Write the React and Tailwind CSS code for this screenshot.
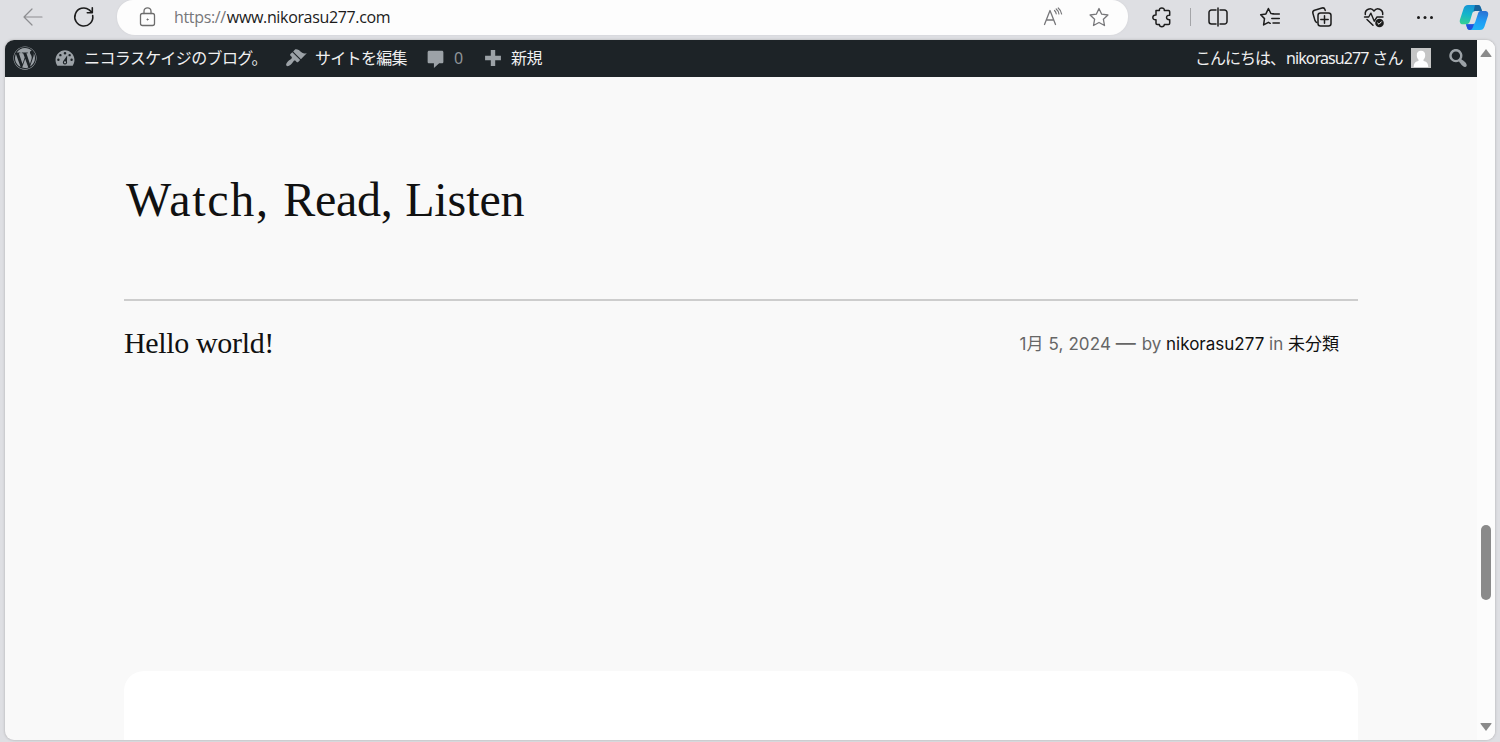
import { FaWordpress } from 'react-icons/fa'

function LineIcon({ children, className = 'text-[#1c1c1c]' }) {
  return (
    <svg
      className={`h-6 w-6 shrink-0 ${className}`}
      viewBox="0 0 24 24"
      fill="none"
      stroke="currentColor"
      strokeWidth="1.5"
      strokeLinecap="round"
      strokeLinejoin="round"
    >
      {children}
    </svg>
  )
}

function AdminIcon({ children, className = 'h-[22px] w-[22px]' }) {
  return (
    <svg className={`shrink-0 ${className}`} viewBox="0 0 20 20" fill="#9ca2a7">
      {children}
    </svg>
  )
}

function CopilotLogo() {
  return (
    <svg className="h-[27px] w-[30px] shrink-0" viewBox="0 0 30 27">
      <defs>
        <linearGradient id="left" x1="0.5" y1="0" x2="0.3" y2="1">
          <stop offset="0" stopColor="#1793d6" />
          <stop offset="0.5" stopColor="#13b5cb" />
          <stop offset="1" stopColor="#35cf94" />
        </linearGradient>
        <linearGradient id="right" x1="0.6" y1="0" x2="0.4" y2="1">
          <stop offset="0" stopColor="#2a74d4" />
          <stop offset="0.5" stopColor="#1f9cf4" />
          <stop offset="1" stopColor="#1fb4f6" />
        </linearGradient>
      </defs>
      <path d="M9 1h10c2 0 2.500 1.500 3 3l1 3h-7c-1.400 0-2.300 1-2.800 2.600L11 17c-.7 2.200-2 3.300-4 3.300H4C1 20.300.3 18 1 15.500L4.600 4.500C5.300 2.200 6.600 1 9 1z" fill="url(#left)" />
      <path d="M16 1h3c2 0 2.500 1.500 3 3l1 3h-7l-1.500.5z" fill="#17639c" />
      <path d="M21 26H11c-2 0-2.700-1.300-3.200-3L7 20.300h6.500c1.400 0 2.300-1 2.800-2.600L19 9.500C19.600 7.600 20.600 7 22 7h4c3 0 3.700 2.200 3 4.700L25.500 22.500C24.700 24.900 23.400 26 21 26z" fill="url(#right)" />
      <path d="M7 20.300h6.500l1.500-.5-1 3.200c-.7 2-1.700 3-3 3-2 0-2.700-1.300-3.200-3z" fill="#2450dc" />
    </svg>
  )
}

function Toolbar() {
  return (
    <header className="flex h-[39px] shrink-0 items-start">
      <div className="flex h-[34px] w-[117px] items-center gap-[27px] pl-[21px]">
        <LineIcon className="text-[#8d8e91]">
          <path d="M21 12H3M11 4 3 12l8 8" strokeWidth="1.2" />
        </LineIcon>
        <LineIcon>
          <path d="M20.700 10.600A9 9 0 1 1 17.200 4.800L20 7.500M20.300 2.800v5h-5" strokeWidth="1.600" />
        </LineIcon>
      </div>

      <div className="flex h-[35px] w-[1011px] items-center rounded-b-[18px] rounded-t-[16px] bg-[#fdfdfd] pb-px pl-[18px] pr-[17px] shadow-[0_0_2px_#cfcfd3]">
        <LineIcon className="text-[#6d6d6d]">
          <rect x="5.500" y="8.500" width="14" height="12" rx="2" strokeWidth="1.300" />
          <path d="M9 8.500V6.300a3.500 3.500 0 0 1 7 0v2.200" strokeWidth="1.300" />
          <circle cx="12.500" cy="14.500" r="0.700" fill="currentColor" strokeWidth="0.600" />
        </LineIcon>
        <p className="ml-[15px] whitespace-nowrap font-['Open_Sans',sans-serif] text-[16px] tracking-[-0.340px] text-[#1b1b1b]">
          <span className="text-[#77777a]">https://</span>
          <span className="pl-px">www.nikorasu277.com</span>
        </p>
        <div className="ml-auto flex items-center gap-[22px]">
          <LineIcon className="text-[#77777a]">
            <path d="M3.500 19.500 9 5.500l5.500 14M5.400 15h7.200" strokeWidth="1.300" />
            <path d="M13.500 5.500c1 1 1.600 2 1.700 3.300M15.200 4c1.600 1.300 2.500 3 2.700 5M17.200 3c2 1.600 3.100 3.500 3.400 6" strokeWidth="1.200" />
          </LineIcon>
          <LineIcon className="text-[#77777a]">
            <path d="m12 3.500 2.700 5.700 6.200.8-4.500 4.300 1.100 6.200-5.500-3-5.500 3 1.100-6.200L3.100 10l6.200-.8z" strokeWidth="1.300" />
          </LineIcon>
        </div>
      </div>

      <div className="flex h-[34px] items-center pl-[22px]">
        <LineIcon>
          <path d="M6 5.500h3.400C8.800 2 14.800 2 14.300 5.500H18.500c.8 0 1.200.5 1.200 1.200v3.500c-4.200-.6-4.200 5 0 4.500v3.500c0 .8-.5 1.200-1.200 1.200h-4.200c.5 3-5.500 3-4.900 0H7.200c-.8 0-1.200-.5-1.200-1.200v-3.400c-4.200.6-4.200-5.400 0-4.800z" />
        </LineIcon>
        <div className="ml-4 h-[18px] w-px bg-[#a4a5a8]" />
        <LineIcon className="ml-[15px] text-[#1c1c1c]">
          <path d="M10 5H5.500A2.500 2.500 0 0 0 3 7.500v9A2.500 2.500 0 0 0 5.500 19H10M14 5h4.500A2.500 2.500 0 0 1 21 7.500v9a2.500 2.500 0 0 1-2.500 2.500H14M12 3v18" />
        </LineIcon>
        <div className="ml-7 flex items-center gap-7">
          <LineIcon>
            <path d="M15.600 8.800 12.900 8.500 10.400 3.500 7.900 8.900l-5.200.9 3.800 3.800-.9 6.300 4.800-2.600 1.800 1M14.500 9h6.800M13.800 13.500h7.500M15 18h6.300" />
          </LineIcon>
          <LineIcon>
            <rect x="8" y="8" width="13" height="13" rx="2.500" />
            <path d="M14.500 10.800v7.400M10.800 14.500h7.400M6.800 17.500c-1-.3-1.500-1-1.800-1.900L2.900 8.200C2.500 6.700 3.300 5.600 4.600 5.200L12 3c1.500-.4 2.600.3 3 1.600l.2.800" />
          </LineIcon>
          <LineIcon>
            <path d="M3.300 9.500c-.7-5 5.700-7.800 8.700-3.500 3-4.300 9.300-1.500 8.700 3.500M5 14.500l6 5.800" />
            <path d="M2.500 12h4.200l2.200-3.800 3.400 8 2.700-4.200h6" strokeWidth="1.400" />
            <circle cx="17.500" cy="18" r="4.300" fill="currentColor" stroke="none" />
            <path d="m15.700 18.100 1.300 1.200 2.400-2.500" stroke="white" strokeWidth="1" />
          </LineIcon>
          <LineIcon className="-ml-px text-[#1c1c1c]">
            <g fill="currentColor" stroke="none">
              <circle cx="5.500" cy="12.500" r="1.500" />
              <circle cx="12" cy="12.500" r="1.500" />
              <circle cx="18.500" cy="12.500" r="1.500" />
            </g>
          </LineIcon>
        </div>
        <div className="ml-[22px] flex">
          <CopilotLogo />
        </div>
      </div>
    </header>
  )
}

function AdminBar() {
  return (
    <nav className="flex h-[37px] shrink-0 items-center bg-[#1d2327] pb-px pl-[8px] pr-[7px] font-['Noto_Sans','Noto_Sans_CJK_JP',sans-serif] text-[16px] text-[#f0f0f1]">
      <FaWordpress className="h-6 w-6 shrink-0 text-[#9ca2a7]" />
      <div className="ml-[17px] flex w-[231px] items-center gap-[8px]">
        <AdminIcon>
          <path
            fillRule="evenodd"
            d="M3 17h14c1-1.500 1.600-3.200 1.600-5.100C18.600 7 14.700 3 10 3s-8.600 4-8.600 8.900c0 1.900.6 3.600 1.600 5.100zM10 4.500a1.200 1.200 0 1 1 0 2.400 1.200 1.200 0 0 1 0-2.400zM5.800 6.300a1.100 1.100 0 1 1 0 2.200 1.100 1.100 0 0 1 0-2.200zm8.400 0a1.100 1.100 0 1 1 0 2.200 1.100 1.100 0 0 1 0-2.200zM4 10.500a1.100 1.100 0 1 1 0 2.200 1.100 1.100 0 0 1 0-2.200zm12 0a1.100 1.100 0 1 1 0 2.200 1.100 1.100 0 0 1 0-2.200zM12 7.800l-.2 5.200c.5 1.700-.3 2.900-1.800 2.900-1.600 0-2.400-1.500-1.700-2.900zM10 12.900a1 1 0 1 0 0 2 1 1 0 0 0 0-2z"
          />
        </AdminIcon>
        <span className="whitespace-nowrap tracking-[-0.600px]">ニコラスケイジのブログ。</span>
      </div>
      <div className="flex w-[140px] items-center gap-[8px]">
        <AdminIcon>
          <path d="M14.480 11.060 7.410 3.990l1.500-1.500c.5-.56 2.300-.47 3.510.32 1.210.8 1.430 1.280 2.910 2.100 1.180.64 2.450 1.260 4.450.85zm-.71.71L6.700 4.700 4.930 6.470c-.39.39-.39 1.020 0 1.410l1.060 1.060c.39.39.39 1.030 0 1.420-.6.600-1.430 1.110-2.210 1.690-.35.260-.7.530-1.010.84C1.430 14.230.4 16.080 1.400 17.070c.99 1 2.840-.03 4.180-1.360.31-.31.580-.66.850-1.020.57-.78 1.080-1.610 1.690-2.210.39-.39 1.020-.39 1.410 0l1.060 1.060c.39.39 1.020.39 1.410 0z" />
        </AdminIcon>
        <span className="whitespace-nowrap tracking-[-0.700px]">サイトを編集</span>
      </div>
      <div className="flex w-[57px] items-center gap-[8px]">
        <AdminIcon className="h-[21px] w-[21px]">
          <path d="M4 2.500h12c1 0 1.500.5 1.500 1.500v9c0 1-.5 1.500-1.500 1.500h-2.500l-5 4.500v-4.500H4c-1 0-1.500-.5-1.500-1.500V4c0-1 .5-1.500 1.500-1.500z" />
        </AdminIcon>
        <span className="text-[#8f9499]">0</span>
      </div>
      <div className="flex items-center gap-[7px]">
        <AdminIcon>
          <path d="M17.200 8v4H12v5.200H8V12H2.800V8H8V2.800h4V8z" />
        </AdminIcon>
        <span className="tracking-[-0.400px]">新規</span>
      </div>

      <div className="ml-auto flex items-center">
        <span className="whitespace-nowrap tracking-[-1px]">こんにちは、</span>
        <span className="whitespace-nowrap pl-px tracking-[-0.600px]">
          <span className="tracking-[-0.900px]">nikorasu277</span> さん
        </span>
        <svg className="ml-[8px] h-5 w-5" viewBox="0 0 20 20">
          <rect width="20" height="20" fill="#c5c5c5" />
          <path d="M10 2.800c2.800 0 4.400 1.900 4.200 4.700-.1 1.800-.7 3.200-1.700 4.200v1.400c2.700.5 4.500 1.800 4.800 5.900H2.700c.3-4.100 2.100-5.400 4.800-5.900v-1.400c-1-1-1.600-2.400-1.700-4.200C5.600 4.700 7.200 2.800 10 2.800z" fill="white" />
        </svg>
        <AdminIcon className="ml-[15px] h-6 w-6">
          <path d="M12.140 4.180c1.870 1.870 2.110 4.750.72 6.890.12.100.22.210.36.310.2.160.47.360.81.590.34.240.56.390.66.470.42.310.73.570.94.780.32.320.6.650.84 1 .25.350.44.690.59 1.040.14.350.21.680.18 1-.02.320-.14.590-.36.810s-.49.340-.81.360c-.31.020-.65-.04-.99-.19-.35-.14-.7-.34-1.040-.59-.35-.24-.68-.52-1-.84-.21-.21-.47-.52-.77-.93-.1-.13-.25-.35-.47-.66-.22-.32-.4-.57-.56-.78-.16-.2-.29-.35-.44-.5-2.070 1.090-4.690.76-6.440-.98-2.140-2.150-2.140-5.640 0-7.780 2.150-2.150 5.630-2.150 7.780 0zm-1.410 6.360c1.360-1.370 1.360-3.580 0-4.950-1.370-1.370-3.590-1.370-4.950 0-1.370 1.370-1.370 3.580 0 4.950 1.360 1.370 3.580 1.370 4.950 0z" />
        </AdminIcon>
      </div>
    </nav>
  )
}

function Scrollbar() {
  return (
    <div className="flex w-[18px] shrink-0 flex-col items-center bg-[#fcfcfc] pt-[9px]">
      <svg className="h-[8px] w-[12px]" viewBox="0 0 12 8" fill="#8a8a8a">
        <path d="M6 0 11.500 7.300c.2.400 0 .7-.5.700H1C.5 8 .3 7.700.5 7.300z" />
      </svg>
      <div className="mt-[468px] h-[75px] w-[10px] rounded-full bg-[#8a8a8a]" />
      <svg className="mt-[122px] h-[9px] w-[12px]" viewBox="0 0 12 9" fill="#8a8a8a">
        <path d="M6 9 11.500 1.700c.2-.4 0-.7-.5-.7H1C.5 1 .3 1.300.5 1.700z" />
      </svg>
    </div>
  )
}

export default function App() {
  return (
    <div className="flex h-[742px] w-[1500px] flex-col overflow-hidden bg-[#dedfe3]">
      <Toolbar />
      <div className="mx-[5px] mt-px flex h-[700px] overflow-hidden rounded-[9px] bg-[#f9f9f9] shadow-[0_0_2px_1px_#c6c6c9]">
        <div className="flex min-w-0 flex-1 flex-col">
          <AdminBar />
          <main className="flex flex-1 flex-col px-[119px] text-[#111111]">
            <h1 className="mt-[93px] h-[60px] whitespace-nowrap pl-[2px] font-['Liberation_Serif',serif] text-[48px] leading-[60px]">
              <span className="tracking-[1.700px]">Watch, </span>
              <span className="tracking-[-0.300px]">Read, </span>
              <span className="pl-px tracking-[-0.100px]">Listen</span>
            </h1>
            <div className="mt-[69px] flex h-[88px] w-[1234px] items-center justify-between border-t-2 border-[#cdcdcd] pr-[19px]">
              <h2 className="-mt-0.5 whitespace-nowrap font-['Liberation_Serif',serif] text-[30px] leading-[40px] tracking-[-0.350px]">
                Hello world!
              </h2>
              <p className="-mt-0.5 whitespace-nowrap font-['Inter','Noto_Sans_CJK_JP',sans-serif] text-[17px] leading-[26px] text-[#666666]">
                <span className="tracking-[0.100px]">1月 5, 2024 </span>
                <span className="pr-px text-[20px]">—</span> by{' '}
                <span className="text-[#111111]">nikorasu277</span> in{' '}
                <span className="text-[#111111]">未分類</span>
              </p>
            </div>
            <div className="mt-[284px] w-[1234px] flex-1 rounded-t-[20px] bg-white" />
          </main>
        </div>
        <Scrollbar />
      </div>
    </div>
  )
}
